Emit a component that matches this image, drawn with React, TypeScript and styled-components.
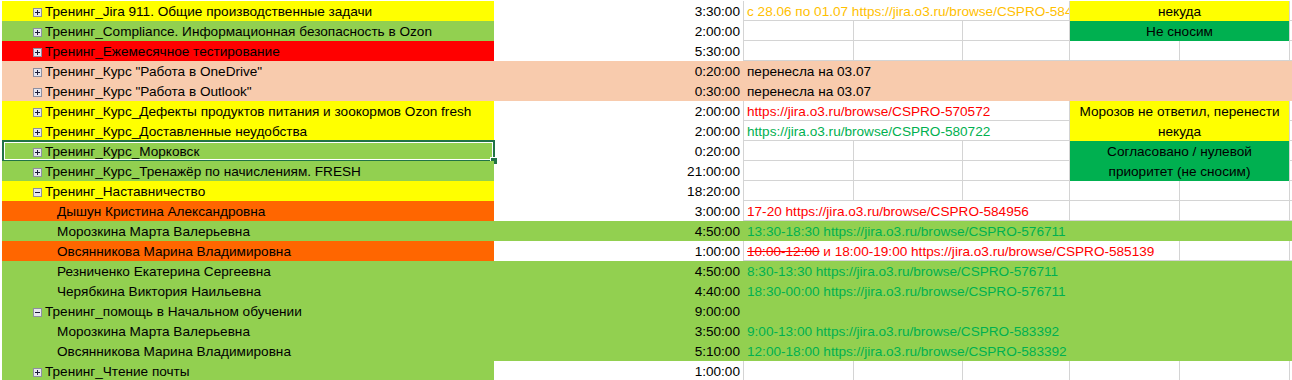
import React from "react";
import styled, { createGlobalStyle, css } from "styled-components";

const GRID = "#D4D4D4";
const YELLOW = "#FFFF00";
const GREEN = "#92D050";
const RED = "#FF0000";
const PEACH = "#F8CBAD";
const ORANGE = "#FF6600";
const DARK_GREEN = "#00B050";

const GlobalStyle = createGlobalStyle`
  body {
    margin: 0;
    background: #fff;
    font-family: "Liberation Sans", Arial, sans-serif;
  }
`;

const Sheet = styled.div`
  display: grid;
  grid-template-columns: 492px 250px 110px 109px 107px 110px 110px 1fr;
  grid-auto-rows: 20px;
  width: 1292px;
  height: 380px;
  padding: 1px 0 0 2px;
  box-sizing: border-box;
  overflow: hidden;
  font-size: 13.6px;
  color: #000;
`;

type Place = { $row: number; $col: number; $span?: number; $rows?: number };

const base = css<Place & { $bg?: string }>`
  grid-row: ${(p) => p.$row} / span ${(p) => p.$rows ?? 1};
  grid-column: ${(p) => p.$col} / span ${(p) => p.$span ?? 1};
  background: ${(p) => p.$bg ?? "#fff"};
  box-sizing: border-box;
  padding-top: 2px;
  line-height: 18px;
  white-space: nowrap;
  overflow: hidden;
`;

const LabelCell = styled.div<Place & { $bg: string; $indent: number }>`
  ${base};
  display: flex;
  align-items: center;
  gap: 3px;
  padding-left: ${(p) => p.$indent}px;
  overflow: visible;
  position: relative;
`;

const TimeCell = styled.div<Place & { $bg?: string; $edge: boolean }>`
  ${base};
  text-align: right;
  padding-right: 3px;
  border-right: 1px solid ${(p) => (p.$edge ? GRID : "transparent")};
`;

const GridCell = styled.div<Place & { $bg?: string; $ink?: string }>`
  ${base};
  color: ${(p) => p.$ink ?? "#000"};
  padding-left: 3px;
  border-right: 1px solid ${GRID};
  border-bottom: 1px solid ${GRID};
`;

const BandCell = styled.div<Place & { $bg: string; $ink?: string }>`
  ${base};
  color: ${(p) => p.$ink ?? "#000"};
  padding-left: 3px;
`;

const MergedNote = styled.div<Place & { $bg: string }>`
  ${base};
  line-height: 20px;
  padding-top: 1px;
  text-align: center;
  white-space: normal;
  border-right: 1px solid ${GRID};
`;

const Strike = styled.span`
  text-decoration: line-through;
`;

const Selection = styled.div`
  position: absolute;
  left: 0;
  top: -1px;
  right: -1px;
  bottom: -1px;
  border: 2px solid #217346;
  box-shadow: inset 0 0 0 1px #fff;
  pointer-events: none;

  &::after {
    content: "";
    position: absolute;
    right: -5px;
    bottom: -5px;
    width: 6px;
    height: 6px;
    background: #217346;
    border: 1px solid #fff;
  }
`;

const Toggle = ({ open }: { open: boolean }) => (
  <svg width="9" height="9" viewBox="0 0 9 9" style={{ flex: "none" }}>
    <rect x="0.5" y="0.5" width="8" height="8" fill="#E6E6EE" stroke="#8E8FA0" />
    <path d="M2 4.5h5" stroke="#1C1C3A" strokeWidth="1" />
    {!open && <path d="M4.5 2v5" stroke="#1C1C3A" strokeWidth="1" />}
  </svg>
);

type Row = {
  label: string;
  toggle?: "open" | "closed";
  fill: string;
  band?: string;
  time: string;
  note?: React.ReactNode;
  ink?: string;
  span?: number;
  selected?: boolean;
};

const LINK = "https://jira.o3.ru/browse/CSPRO-";

const rows: Row[] = [
  { label: "Тренинг_Jira 911. Общие производственные задачи", toggle: "closed", fill: YELLOW, time: "3:30:00", note: `с 28.06 по 01.07 ${LINK}584`, ink: "#FFC000", span: 3 },
  { label: "Тренинг_Compliance. Информационная безопасность в Ozon", toggle: "closed", fill: GREEN, time: "2:00:00" },
  { label: "Тренинг_Ежемесячное тестирование", toggle: "closed", fill: RED, time: "5:30:00" },
  { label: 'Тренинг_Курс "Работа в OneDrive"', toggle: "closed", fill: PEACH, band: PEACH, time: "0:20:00", note: "перенесла на 03.07" },
  { label: 'Тренинг_Курс "Работа в Outlook"', toggle: "closed", fill: PEACH, band: PEACH, time: "0:30:00", note: "перенесла на 03.07" },
  { label: "Тренинг_Курс_Дефекты продуктов питания и зоокормов Ozon fresh", toggle: "closed", fill: YELLOW, time: "2:00:00", note: `${LINK}570572`, ink: RED, span: 3 },
  { label: "Тренинг_Курс_Доставленные неудобства", toggle: "closed", fill: YELLOW, time: "2:00:00", note: `${LINK}580722`, ink: DARK_GREEN, span: 3 },
  { label: "Тренинг_Курс_Морковск", toggle: "closed", fill: GREEN, time: "0:20:00", selected: true },
  { label: "Тренинг_Курс_Тренажёр по начислениям. FRESH", toggle: "closed", fill: GREEN, time: "21:00:00" },
  { label: "Тренинг_Наставничество", toggle: "open", fill: YELLOW, time: "18:20:00" },
  { label: "Дышун Кристина Александровна", fill: ORANGE, time: "3:00:00", note: `17-20 ${LINK}584956`, ink: RED, span: 3 },
  { label: "Морозкина Марта Валерьевна", fill: GREEN, band: GREEN, time: "4:50:00", note: `13:30-18:30 ${LINK}576711`, ink: DARK_GREEN },
  {
    label: "Овсянникова Марина Владимировна",
    fill: ORANGE,
    time: "1:00:00",
    note: (
      <>
        <Strike>10:00-12:00</Strike> и 18:00-19:00 {LINK}585139
      </>
    ),
    ink: RED,
    span: 4,
  },
  { label: "Резниченко Екатерина Сергеевна", fill: GREEN, band: GREEN, time: "4:50:00", note: `8:30-13:30 ${LINK}576711`, ink: DARK_GREEN },
  { label: "Черябкина Виктория Наильевна", fill: GREEN, band: GREEN, time: "4:40:00", note: `18:30-00:00 ${LINK}576711`, ink: DARK_GREEN },
  { label: "Тренинг_помощь в Начальном обучении", toggle: "open", fill: GREEN, band: GREEN, time: "9:00:00" },
  { label: "Морозкина Марта Валерьевна", fill: GREEN, band: GREEN, time: "3:50:00", note: `9:00-13:00 ${LINK}583392`, ink: DARK_GREEN },
  { label: "Овсянникова Марина Владимировна", fill: GREEN, band: GREEN, time: "5:10:00", note: `12:00-18:00 ${LINK}583392`, ink: DARK_GREEN },
  { label: "Тренинг_Чтение почты", toggle: "closed", fill: GREEN, time: "1:00:00" },
];

// comments merged over columns F:G
const comments = [
  { row: 1, rows: 1, bg: YELLOW, text: ["некуда"] },
  { row: 2, rows: 1, bg: DARK_GREEN, text: ["Не сносим"] },
  { row: 6, rows: 2, bg: YELLOW, text: ["Морозов не ответил, перенести", "некуда"] },
  { row: 8, rows: 2, bg: DARK_GREEN, text: ["Согласовано / нулевой", "приоритет (не сносим)"] },
];

const coveredByComment = (r: number) => comments.some((c) => r >= c.row && r < c.row + c.rows);

const renderTail = (row: Row, r: number) => {
  if (row.band) {
    return (
      <BandCell key="band" $row={r} $col={3} $span={6} $bg={row.band} $ink={row.ink}>
        {row.note}
      </BandCell>
    );
  }
  const cells: React.ReactNode[] = [];
  let col = 3;
  if (row.note) {
    cells.push(
      <GridCell key="note" $row={r} $col={3} $span={row.span ?? 1} $ink={row.ink}>
        {row.note}
      </GridCell>
    );
    col += row.span ?? 1;
  }
  const lastCol = coveredByComment(r) ? 5 : 7;
  for (; col <= lastCol; col++) {
    cells.push(<GridCell key={col} $row={r} $col={col} />);
  }
  cells.push(<GridCell key="h" $row={r} $col={8} />);
  return cells;
};

const App: React.FC = () => (
  <>
    <GlobalStyle />
    <Sheet>
      {rows.map((row, i) => {
        const r = i + 1;
        return (
          <React.Fragment key={r}>
            <LabelCell $row={r} $col={1} $bg={row.fill} $indent={row.toggle ? 31 : 55}>
              {row.toggle && <Toggle open={row.toggle === "open"} />}
              <span>{row.label}</span>
              {row.selected && <Selection />}
            </LabelCell>
            <TimeCell $row={r} $col={2} $bg={row.band} $edge={!row.band}>
              {row.time}
            </TimeCell>
            {renderTail(row, r)}
          </React.Fragment>
        );
      })}
      {comments.map((c) => (
        <MergedNote key={c.row} $row={c.row} $rows={c.rows} $col={6} $span={2} $bg={c.bg}>
          {c.text.map((t, k) => (
            <React.Fragment key={k}>
              {k > 0 && <br />}
              {t}
            </React.Fragment>
          ))}
        </MergedNote>
      ))}
    </Sheet>
  </>
);

export default App;
